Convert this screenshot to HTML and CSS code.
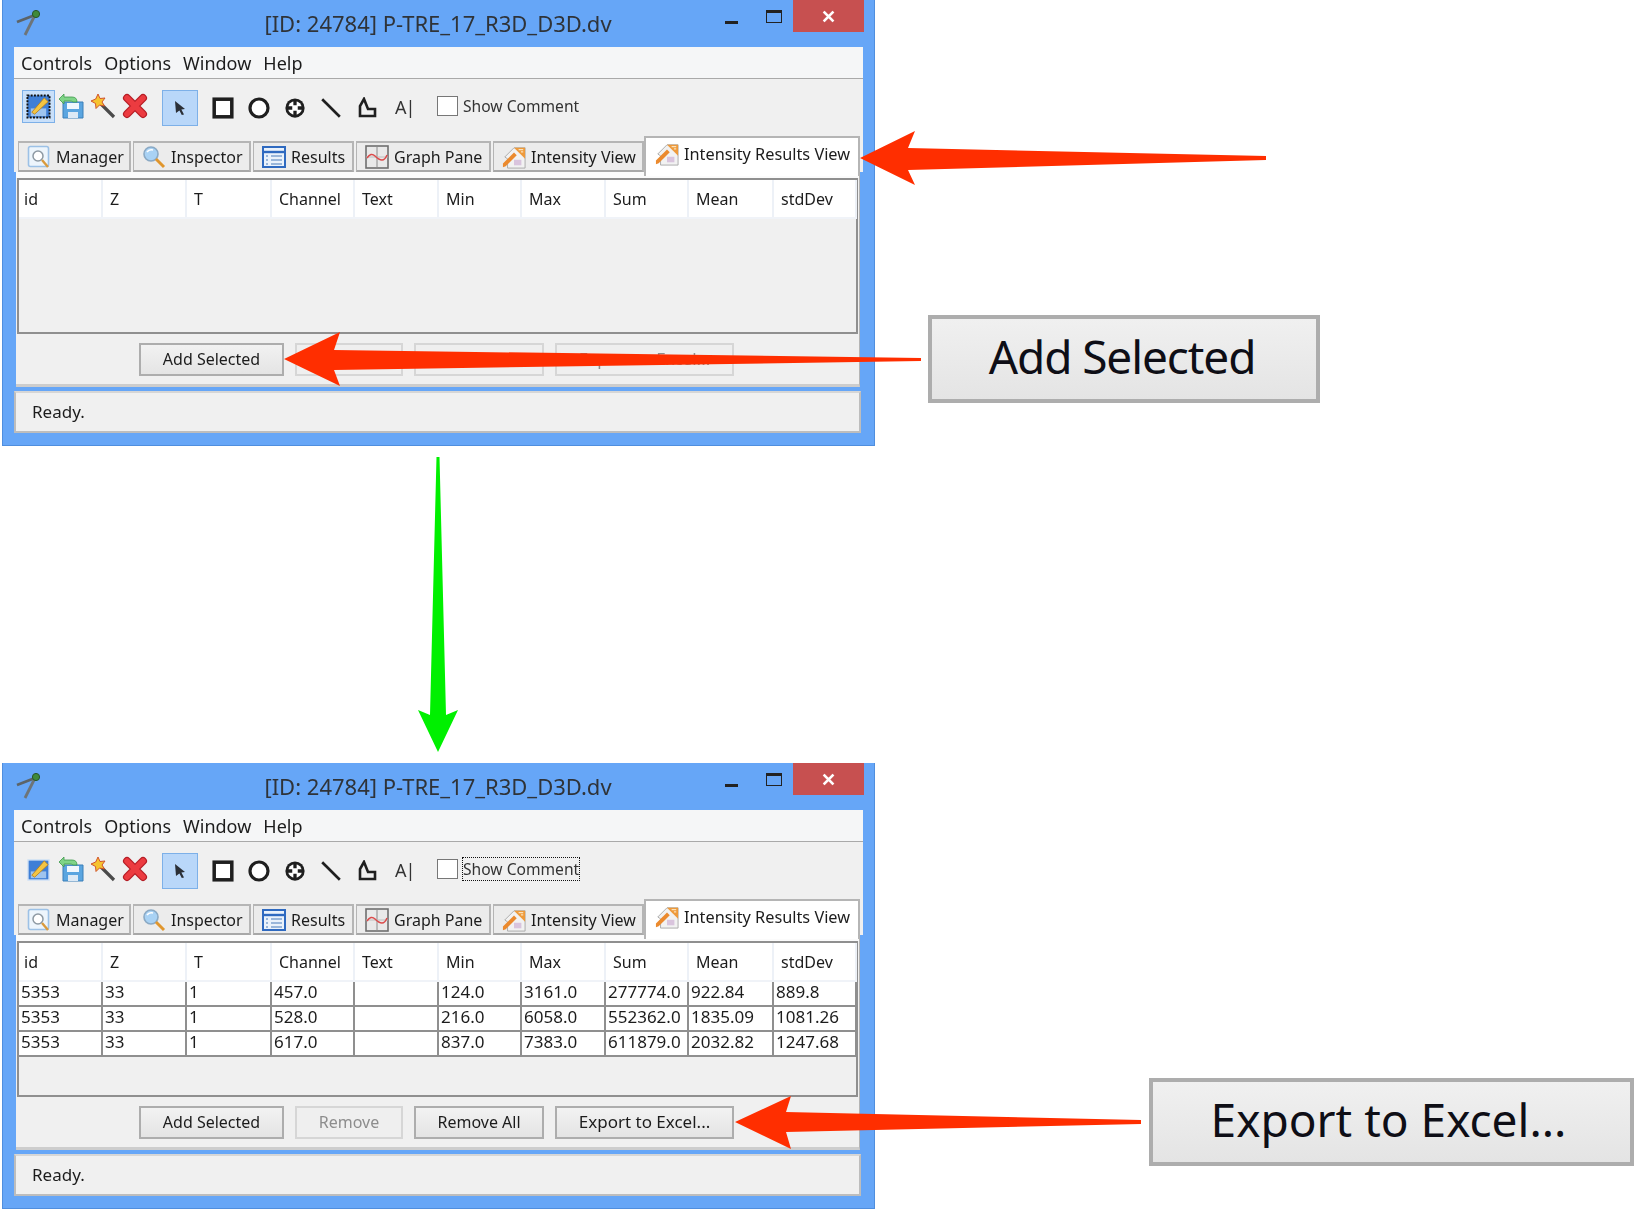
FILE: index.html
```html
<!DOCTYPE html>
<html lang="en">
<head>
    <meta charset="UTF-8">
    <title>Intensity Results View</title>
    <link rel="stylesheet" href="styles.css">
</head>
<body>
<svg class="sprite" width="0" height="0">
    <symbol id="i-compass" viewBox="0 0 28 28">
        <path d="M20 6 L2 13" stroke="#5c6468" stroke-width="2.8" fill="none"/>
        <path d="M20 6 L10 26" stroke="#6d7478" stroke-width="2.8" fill="none"/>
        <circle cx="21" cy="5" r="3.6" fill="#3f8a3a" stroke="#26552a"/>
    </symbol>
    <symbol id="i-edit" viewBox="0 0 26 26">
        <rect x="1.5" y="1.5" width="23" height="23" fill="#3f7fd6" stroke="#111" stroke-width="2" stroke-dasharray="2 1.4"/>
        <rect x="5" y="15" width="16" height="8" fill="#9fc4ee"/>
        <path d="M6 19 L19 4 L23 8 L9 21 Z" fill="#f4c542" stroke="#b37a16" stroke-width=".8"/>
    </symbol>
    <symbol id="i-edit-plain" viewBox="0 0 26 26">
        <rect x="2" y="3" width="22" height="21" fill="#3f7fd6" stroke="#d5e4f5" stroke-width="1.5"/>
        <rect x="5" y="15" width="16" height="7" fill="#9fc4ee"/>
        <path d="M6 19 L19 4 L23 8 L9 21 Z" fill="#f4c542" stroke="#b37a16" stroke-width=".8"/>
    </symbol>
    <symbol id="i-save" viewBox="0 0 26 26">
        <path d="M5 9 H25 V25 H5 Z" fill="#5aa5e0" stroke="#3a7fb8"/>
        <rect x="9" y="10" width="12" height="6" fill="#f0f7fd"/>
        <rect x="10" y="19" width="10" height="6" fill="#dce9f5"/>
        <path d="M1 6 L6 1 V4 H14 Q19 4 19 9 H15 Q14 8 12 8 H6 V11 Z" fill="#7fd487" stroke="#3f9a4c" stroke-width=".8"/>
    </symbol>
    <symbol id="i-wand" viewBox="0 0 26 26">
        <path d="M11 11 L24 24" stroke="#4a4a4a" stroke-width="3.2"/>
        <path d="M8 1 L10 5.5 L15 5 L12 9 L14.5 13 L9.5 12 L6 15.5 L5.5 10.5 L1 8 L5.7 6 Z" fill="#f6c32f" stroke="#d2542b"/>
    </symbol>
    <symbol id="i-delete" viewBox="0 0 26 26">
        <path d="M5 5 L21 21 M21 5 L5 21" stroke="#b51d25" stroke-width="8" stroke-linecap="round"/>
        <path d="M5 5 L21 21 M21 5 L5 21" stroke="#ec3b40" stroke-width="5.6" stroke-linecap="round"/>
    </symbol>
    <symbol id="i-cursor" viewBox="0 0 16 16">
        <path d="M3 1 L13 9 L9.4 9.6 L12 14.4 L9.8 15 L7.4 10.4 L4 13 Z" fill="#2b2f36"/>
    </symbol>
    <symbol id="i-rect" viewBox="0 0 20 20">
        <rect x="2" y="2" width="16" height="16" fill="#fff" stroke="#1f1f1f" stroke-width="3.2"/>
    </symbol>
    <symbol id="i-circle" viewBox="0 0 22 22">
        <circle cx="11" cy="11" r="9" fill="#fff" stroke="#1f1f1f" stroke-width="3.2"/>
    </symbol>
    <symbol id="i-point" viewBox="0 0 24 24">
        <circle cx="12" cy="12" r="10.5" fill="#1f1f1f"/>
        <circle cx="12" cy="12" r="7.5" fill="#fff"/>
        <path d="M12 3 V9 M12 15 V21 M3 12 H9 M15 12 H21" stroke="#1f1f1f" stroke-width="3.6"/>
    </symbol>
    <symbol id="i-line" viewBox="0 0 20 20">
        <path d="M2 2 L18 18" stroke="#1f1f1f" stroke-width="2.4"/>
    </symbol>
    <symbol id="i-poly" viewBox="0 0 20 22">
        <path d="M7 2 L3 9 V19 H18 V12 H11 Z" fill="none" stroke="#1f1f1f" stroke-width="2.6"/>
    </symbol>
    <symbol id="i-manager" viewBox="0 0 24 24">
        <rect x="1.5" y="1.5" width="20" height="20" rx="2" fill="#edf5fc" stroke="#9cc1e6" stroke-width="1.6"/>
        <circle cx="11" cy="11" r="5" fill="#fff" stroke="#8d99a3" stroke-width="1.5"/>
        <path d="M15 15 L21 22" stroke="#d99a3c" stroke-width="2.4"/>
    </symbol>
    <symbol id="i-inspector" viewBox="0 0 24 24">
        <circle cx="9" cy="9" r="7" fill="#a9d2f4" stroke="#8aa9c4" stroke-width="1.6"/>
        <path d="M5 7 Q7 4 11 5" stroke="#fff" stroke-width="1.6" fill="none"/>
        <path d="M14 14 L22 22" stroke="#e0962d" stroke-width="3"/>
    </symbol>
    <symbol id="i-results" viewBox="0 0 24 24">
        <rect x="1" y="2" width="22" height="20" fill="#eaf2fb" stroke="#2f6ac0" stroke-width="2"/>
        <path d="M2 7 H22" stroke="#2f6ac0" stroke-width="2.4"/>
        <path d="M4 11 H6 M4 15 H6 M4 19 H6 M9 11 H20 M9 15 H20 M9 19 H20" stroke="#7fa3cf" stroke-width="1.6"/>
    </symbol>
    <symbol id="i-graph" viewBox="0 0 24 24">
        <rect x="1" y="1" width="22" height="22" fill="#e9e9e9" stroke="#6f6f6f" stroke-width="1.6"/>
        <path d="M12 1 V23" stroke="#8a8a8a"/>
        <path d="M1 12 H23" stroke="#bdbdbd"/>
        <path d="M2 13 Q6 7 10 11 T17 15 T22 10" fill="none" stroke="#dc4a4a" stroke-width="1.5"/>
    </symbol>
    <symbol id="i-intensity" viewBox="0 0 26 26">
        <path d="M3 13 L13 3 H25 V25 H6 V15 Z" fill="#f2f2f2" stroke="#a8a8a8"/>
        <path d="M13 3 H25 V15 Z" fill="#ee9a3b"/>
        <path d="M18 5 H23 M20.500 7.500 H23" stroke="#fbe2ba" stroke-width="1.200"/>
        <path d="M1 20 L13 8 L16 11 L4 23 L1 24 Z" fill="#eb8a2e"/>
        <rect x="13" y="16" width="8" height="6" fill="#d9c4dd"/>
    </symbol>
</svg>

<div class="window">
    <div class="titlebar">
        <svg class="app-icon"><use href="#i-compass"/></svg>
        <span class="title">[ID: 24784] P-TRE_17_R3D_D3D.dv</span>
        <div class="win-controls">
            <span class="win-min"></span>
            <span class="win-max"></span>
            <span class="win-close">✕</span>
        </div>
    </div>
    <div class="menu">
        <span class="menu-item">Controls</span>
        <span class="menu-item">Options</span>
        <span class="menu-item">Window</span>
        <span class="menu-item">Help</span>
    </div>
    <div class="toolbar">
        <span class="tool tool-edit tool-focus"><svg><use href="#i-edit"/></svg></span>
        <span class="tool"><svg><use href="#i-save"/></svg></span>
        <span class="tool"><svg><use href="#i-wand"/></svg></span>
        <span class="tool"><svg><use href="#i-delete"/></svg></span>
        <span class="tool-cursor"><svg><use href="#i-cursor"/></svg></span>
        <span class="shape shape-rect"><svg><use href="#i-rect"/></svg></span>
        <span class="shape"><svg><use href="#i-circle"/></svg></span>
        <span class="shape"><svg><use href="#i-point"/></svg></span>
        <span class="shape"><svg><use href="#i-line"/></svg></span>
        <span class="shape"><svg><use href="#i-poly"/></svg></span>
        <span class="shape shape-text">A|</span>
        <span class="checkbox"></span>
        <span class="check-label">Show Comment</span>
    </div>
    <div class="tabs">
        <span class="tab tab-manager"><svg><use href="#i-manager"/></svg>Manager</span>
        <span class="tab tab-inspector"><svg><use href="#i-inspector"/></svg>Inspector</span>
        <span class="tab tab-results"><svg><use href="#i-results"/></svg>Results</span>
        <span class="tab tab-graph"><svg><use href="#i-graph"/></svg>Graph Pane</span>
        <span class="tab tab-intensity"><svg><use href="#i-intensity"/></svg>Intensity View</span>
        <span class="tab tab-active"><svg><use href="#i-intensity"/></svg>Intensity Results View</span>
    </div>
    <div class="panel">
        <div class="table-box">
            <table class="results">
                <colgroup>
                    <col class="c1"><col class="c2"><col class="c3"><col class="c1"><col class="c2">
                    <col class="c1"><col class="c2"><col class="c1"><col class="c3"><col class="c1">
                </colgroup>
                <thead>
                    <tr><th>id</th><th>Z</th><th>T</th><th>Channel</th><th>Text</th><th>Min</th><th>Max</th><th>Sum</th><th>Mean</th><th>stdDev</th></tr>
                </thead>
            </table>
        </div>
        <div class="actions">
            <button class="btn btn-add">Add Selected</button>
            <button class="btn btn-remove" disabled>Remove</button>
            <button class="btn btn-remove-all" disabled>Remove All</button>
            <button class="btn btn-export" disabled>Export to Excel...</button>
        </div>
    </div>
    <div class="status">Ready.</div>
</div>

<div class="window window-after">
    <div class="titlebar">
        <svg class="app-icon"><use href="#i-compass"/></svg>
        <span class="title">[ID: 24784] P-TRE_17_R3D_D3D.dv</span>
        <div class="win-controls">
            <span class="win-min"></span>
            <span class="win-max"></span>
            <span class="win-close">✕</span>
        </div>
    </div>
    <div class="menu">
        <span class="menu-item">Controls</span>
        <span class="menu-item">Options</span>
        <span class="menu-item">Window</span>
        <span class="menu-item">Help</span>
    </div>
    <div class="toolbar">
        <span class="tool tool-edit"><svg><use href="#i-edit-plain"/></svg></span>
        <span class="tool"><svg><use href="#i-save"/></svg></span>
        <span class="tool"><svg><use href="#i-wand"/></svg></span>
        <span class="tool"><svg><use href="#i-delete"/></svg></span>
        <span class="tool-cursor"><svg><use href="#i-cursor"/></svg></span>
        <span class="shape shape-rect"><svg><use href="#i-rect"/></svg></span>
        <span class="shape"><svg><use href="#i-circle"/></svg></span>
        <span class="shape"><svg><use href="#i-point"/></svg></span>
        <span class="shape"><svg><use href="#i-line"/></svg></span>
        <span class="shape"><svg><use href="#i-poly"/></svg></span>
        <span class="shape shape-text">A|</span>
        <span class="checkbox"></span>
        <span class="check-label check-focus">Show Comment</span>
    </div>
    <div class="tabs">
        <span class="tab tab-manager"><svg><use href="#i-manager"/></svg>Manager</span>
        <span class="tab tab-inspector"><svg><use href="#i-inspector"/></svg>Inspector</span>
        <span class="tab tab-results"><svg><use href="#i-results"/></svg>Results</span>
        <span class="tab tab-graph"><svg><use href="#i-graph"/></svg>Graph Pane</span>
        <span class="tab tab-intensity"><svg><use href="#i-intensity"/></svg>Intensity View</span>
        <span class="tab tab-active"><svg><use href="#i-intensity"/></svg>Intensity Results View</span>
    </div>
    <div class="panel">
        <div class="table-box">
            <table class="results">
                <colgroup>
                    <col class="c1"><col class="c2"><col class="c3"><col class="c1"><col class="c2">
                    <col class="c1"><col class="c2"><col class="c1"><col class="c3"><col class="c1">
                </colgroup>
                <thead>
                    <tr><th>id</th><th>Z</th><th>T</th><th>Channel</th><th>Text</th><th>Min</th><th>Max</th><th>Sum</th><th>Mean</th><th>stdDev</th></tr>
                </thead>
                <tbody>
                    <tr><td>5353</td><td>33</td><td>1</td><td>457.0</td><td></td><td>124.0</td><td>3161.0</td><td>277774.0</td><td>922.84</td><td>889.8</td></tr>
                    <tr><td>5353</td><td>33</td><td>1</td><td>528.0</td><td></td><td>216.0</td><td>6058.0</td><td>552362.0</td><td>1835.09</td><td>1081.26</td></tr>
                    <tr><td>5353</td><td>33</td><td>1</td><td>617.0</td><td></td><td>837.0</td><td>7383.0</td><td>611879.0</td><td>2032.82</td><td>1247.68</td></tr>
                </tbody>
            </table>
        </div>
        <div class="actions">
            <button class="btn btn-add">Add Selected</button>
            <button class="btn btn-remove" disabled>Remove</button>
            <button class="btn btn-remove-all">Remove All</button>
            <button class="btn btn-export">Export to Excel...</button>
        </div>
    </div>
    <div class="status">Ready.</div>
</div>

<div class="callout callout-add">Add Selected</div>
<div class="callout callout-export">Export to Excel...</div>

<svg class="arrows" viewBox="0 0 1634 1209">
    <polygon class="red" points="860,158 915,131 908,148 1266,156 1266,160 908,170 915,185"/>
    <polygon class="red" points="284,359 340,332 334,350 921,358 921,361 334,370 340,386"/>
    <polygon class="green" points="436.5,457 439.5,457 446,715 458,710 438,752 418,710 430,715"/>
    <polygon class="red" points="735,1122 791,1096 786,1112 1141,1120 1141,1124 786,1132 791,1149"/>
</svg>
</body>
</html>
```

FILE: styles.css
```css
:root {
    --frame: #66a6f7;
    --face: #f0f0f0;
    --line: #8f8f8f;
    --text: #1c1c1c;
}
* {
    box-sizing: border-box;
}
body {
    margin: 0;
    width: 1634px;
    height: 1209px;
    padding-left: 2px;
    background: #fff;
    color: var(--text);
    font-family: "Noto Sans", "Open Sans", sans-serif;
    font-size: 16px;
    overflow: hidden;
    position: relative;
}
.sprite {
    position: absolute;
}
svg {
    display: block;
}

/* window frame */
.window {
    width: 873px;
    height: 446px;
    padding: 0 11px;
    background: var(--frame);
    border: 1px solid #4f8ede;
    border-top-width: 0;
    filter: blur(.35px);
}
.window-after {
    margin-top: 317px;
}
.titlebar {
    height: 47px;
    margin: 0 -11px;
    padding: 0 11px 0 12px;
    display: flex;
    align-items: flex-start;
    position: relative;
}
.app-icon {
    width: 28px;
    height: 28px;
    margin-top: 9px;
}
.title {
    flex: 1;
    text-align: center;
    margin: 6px 0 0 -30px;
    font-size: 22px;
    line-height: 34px;
    color: #2f3338;
}
.win-controls {
    position: absolute;
    top: 0;
    right: 10px;
    display: flex;
    align-items: flex-start;
}
.win-min {
    width: 13px;
    height: 3px;
    margin: 21px 28px 0 0;
    background: #222;
}
.win-max {
    width: 16px;
    height: 13px;
    margin: 10px 11px 0 0;
    border: 1.5px solid #222;
    border-top-width: 3px;
}
.win-close {
    width: 71px;
    height: 32px;
    background: #c75050;
    color: #fff;
    text-align: center;
    font-size: 18px;
    font-weight: 700;
    line-height: 33px;
}

/* menu and toolbar */
.menu {
    height: 32px;
    display: flex;
    padding-left: 7px;
    gap: 12px;
    align-items: center;
    background: #f5f6f7;
    border-bottom: 1px solid #a9a9a9;
    font-size: 18px;
}
.toolbar {
    height: 60px;
    padding: 11px 0 0 8px;
    display: flex;
    align-items: flex-start;
    background: var(--face);
}
.tool {
    width: 26px;
    height: 26px;
    margin: 3px 6px 0 0;
}
.tool svg,
.tool-cursor svg,
.shape svg {
    width: 100%;
    height: 100%;
}
.tool-edit {
    margin: 0;
    width: 33px;
    height: 33px;
    padding: 3px;
    margin-right: 3px;
    border: 1px solid transparent;
}
.tool-focus {
    background: #c9e0fa;
    border-color: #7db0e8;
}
.tool-cursor {
    width: 36px;
    height: 36px;
    margin: 0 14px 0 8px;
    padding: 9px;
    background: #b9d7f9;
    border: 1px solid #7db0e8;
}
.shape {
    width: 22px;
    height: 22px;
    margin: 7px 14px 0 0;
}
.shape-text {
    width: 18px;
    margin-left: 3px;
    margin-right: 24px;
    color: #333;
    font-size: 18px;
    letter-spacing: -1px;
    line-height: 20px;
    white-space: nowrap;
}
.checkbox {
    width: 21px;
    height: 20px;
    margin: 6px 5px 0 0;
    background: #fff;
    border: 1.5px solid #777;
}
.check-label {
    margin-top: 5px;
    font-size: 15.6px;
    line-height: 22px;
    color: #333;
}
.check-focus {
    outline: 1px dotted #111;
}

/* tabs */
.tabs {
    height: 34px;
    display: flex;
    align-items: flex-start;
    padding-left: 4px;
    gap: 2px;
    background: var(--face);
    position: relative;
    margin-top: -1px;
}
.tab {
    height: 31px;
    margin-top: 3px;
    display: flex;
    align-items: center;
    gap: 5px;
    padding-left: 8px;
    border: 1px solid #b5b5b5;
    border-width: 2px 2px 2px 1px;
    border-bottom-color: #a8a8a8;
    background: #ececec;
    white-space: nowrap;
}
.tab svg {
    width: 24px;
    height: 24px;
    flex-shrink: 0;
}
.tab-manager { width: 113px; }
.tab-inspector { width: 118px; }
.tab-results { width: 101px; }
.tab-graph { width: 135px; }
.tab-intensity { width: 151px; margin-right: -2px; }
.tab-active {
    width: 216px;
    height: 40px;
    margin-top: -2px;
    padding-left: 9px;
    padding-bottom: 6px;
    background: #fff;
    border: 2px solid #b5b5b5;
    border-bottom: 0;
    font-size: 16.3px;
    position: relative;
}

/* results panel */
.panel {
    height: 215px;
    margin: 0 3px 0 2px;
    padding: 6px 0 0 1px;
    background: linear-gradient(#fbfbfb 6px, var(--face) 6px);
    border-bottom: 3px solid #cdcdcd;
    border-right: 1px solid #b5b5b5;
}
.table-box {
    width: 841px;
    height: 156px;
    border: 2px solid var(--line);
    background: var(--face);
}
.results {
    width: 837px;
    table-layout: fixed;
    border-collapse: collapse;
}
.c1 { width: 83px; }
.c2 { width: 84px; }
.c3 { width: 85px; }
.results th {
    height: 38px;
    padding: 0 0 0 7px;
    text-align: left;
    font-weight: 400;
    background: #fff;
    border-right: 2px solid #edf1f7;
    border-bottom: 2px solid #f0f3f8;
}
.results th:first-child {
    padding-left: 5px;
}
.results td {
    height: 25px;
    padding: 0 0 3px 2px;
    background: #fff;
    border-right: 2px solid var(--line);
    border-bottom: 2px solid var(--line);
    font-size: 17px;
    line-height: 20px;
    white-space: nowrap;
    overflow: hidden;
}
.actions {
    display: flex;
    gap: 11px;
    margin-top: 9px;
    padding-left: 122px;
}
.btn {
    height: 33px;
    padding: 0 0 2px;
    border: 2px solid #adadad;
    background: linear-gradient(#f2f2f2, #e4e4e4);
    color: var(--text);
    font: inherit;
}
.btn:disabled {
    color: #8d8d8d;
    border-color: #d6d6d6;
    background: #efefef;
}
.btn-add { width: 145px; }
.btn-remove { width: 108px; }
.btn-remove-all { width: 130px; }
.btn-export { width: 179px; font-size: 17px; }
.status {
    height: 42px;
    margin-top: 4px;
    padding-left: 16px;
    width: 847px;
    font-size: 17px;
    line-height: 38px;
    background: var(--face);
    border: 2px solid #bdbdbd;
    border-top-color: #d6d6d6;
}

/* zoomed callouts and arrows, drawn over the page */
.callout {
    position: absolute;
    height: 88px;
    border: 4px solid #adadad;
    background: linear-gradient(#f0f0f0, #e4e4e4);
    font-size: 46px;
    line-height: 74px;
    text-align: center;
    color: #0e0e16;
}
.callout-add {
    left: 928px;
    top: 315px;
    width: 392px;
    letter-spacing: -1.1px;
    padding-right: 4px;
}
.callout-export {
    left: 1149px;
    top: 1078px;
    width: 485px;
    padding-right: 6px;
}
.arrows {
    position: absolute;
    top: 0;
    left: 0;
    width: 1634px;
    height: 1209px;
    pointer-events: none;
}
.red { fill: #ff2e00; }
.green { fill: #00f000; }
```
